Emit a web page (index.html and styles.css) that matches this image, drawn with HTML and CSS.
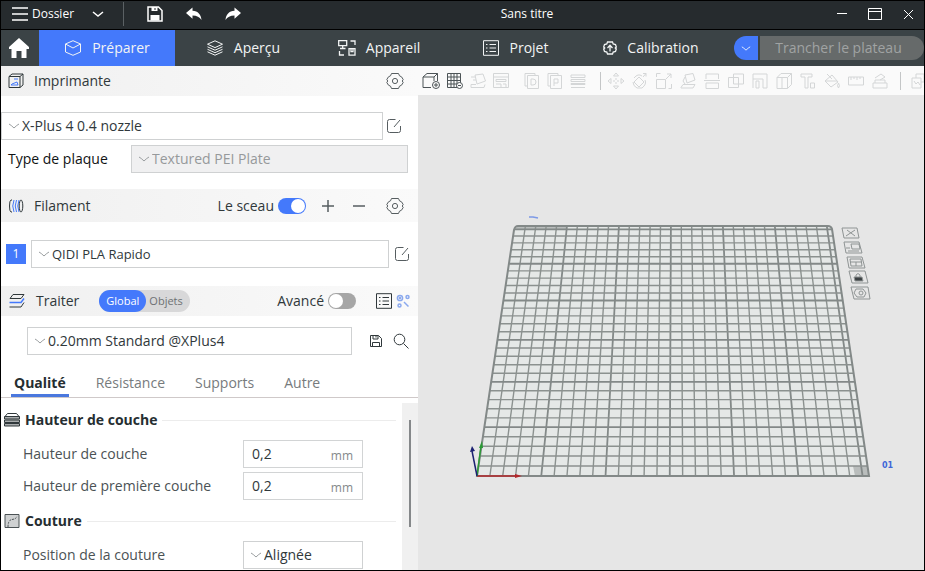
FILE: index.html
```
<!doctype html>
<html lang="fr">
  <head>
    <meta charset="UTF-8" />
    <meta name="viewport" content="width=device-width, initial-scale=1.0" />
    <title>Sans titre</title>
    <link rel="stylesheet" href="styles.css">
  </head>
  <body>
    <!-- shared symbols -->
    <svg class="sprite" aria-hidden="true">
      <symbol id="chevron" viewBox="0 0 12 8">
        <path d="M1 2 Q3 3 6 6 Q9 3 11 2" />
      </symbol>
      <symbol id="gear" viewBox="0 0 18 18">
        <path d="M5.500 1.500 H12.500 Q13 4.500 15.500 4.800 L17.200 7.500 Q15.300 9 17.200 10.500 L15.500 13.200 Q13 13.500 12.500 16.500 H5.500 Q5 13.500 2.500 13.200 L.8 10.500 Q2.700 9 .8 7.500 L2.500 4.800 Q5 4.500 5.500 1.500z" />
        <circle cx="9" cy="9" r="2.600" />
      </symbol>
      <symbol id="edit" viewBox="0 0 16 16">
        <path d="M9.500 1.500 H3.500 q-2 0 -2 2 v9 q0 2 2 2 h9 q2 0 2 -2 V8 M8 9 L14 2" />
      </symbol>
      <symbol id="list" viewBox="0 0 18 16">
        <path d="M1.500 .7 h15 v14.600 h-15z M7.500 4.500 h6.500 M7.500 8 h6.500 M7.500 11.500 h6.500 M4 4.500 h1.500 M4 8 h1.500 M4 11.500 h1.500" />
      </symbol>
    </svg>

    <div class="window">
      <header class="titlebar">
        <button class="file-menu">
          <svg class="line" width="16" height="14" viewBox="0 0 16 14"><path d="M0 1 h16 M0 7 h16 M0 13 h16" stroke-width="1.500" /></svg>
          <span>Dossier</span>
          <svg class="line file-chevron" width="12" height="8" viewBox="0 0 12 8"><path d="M1 2 L6 6 L11 2" stroke-width="1.500" /></svg>
        </button>
        <button class="title-btn" aria-label="Enregistrer">
          <svg width="16" height="16" viewBox="0 0 16 16">
            <path d="M1 1 h10.500 l3.500 3.500 V15 H1z" fill="none" stroke="#fff" stroke-width="1.500" />
            <path d="M4.500 1 h6 v4 h-6z M3.500 9 h9 v5.500 h-9z" fill="#fff" />
            <path d="M8 2 v2" stroke="#262b2e" />
          </svg>
        </button>
        <button class="title-btn" aria-label="Annuler">
          <svg width="16" height="14" viewBox="0 0 16 14"><path d="M0 6 L6.500 .5 V3.700 C12 4 15 7.500 15.500 13 C13.500 10 11 8.600 6.500 8.500 V11.700z" fill="#fff" /></svg>
        </button>
        <button class="title-btn" aria-label="Rétablir">
          <svg width="16" height="14" viewBox="0 0 16 14"><path d="M16 6 L9.500 .5 V3.700 C4 4 1 7.500 .5 13 C2.500 10 5 8.600 9.500 8.500 V11.700z" fill="#fff" /></svg>
        </button>
        <h1 class="doc-title">Sans titre</h1>
        <div class="window-buttons">
          <button aria-label="Réduire"><svg class="line" width="14" height="14" viewBox="0 0 14 14"><path d="M2 6.500 h10" /></svg></button>
          <button aria-label="Agrandir"><svg class="line" width="14" height="14" viewBox="0 0 14 14"><path d="M.5 1.500 h13 v11 h-13z M.5 4.500 h13" /></svg></button>
          <button aria-label="Fermer"><svg class="line" width="14" height="14" viewBox="0 0 14 14"><path d="M3 3 l9 9 M12 3 l-9 9" /></svg></button>
        </div>
      </header>

      <nav class="tabs">
        <a class="home" href="#" aria-label="Accueil">
          <svg width="20" height="20" viewBox="0 0 20 20"><path d="M10 0 L20 9 V11 H17.500 V20 H12.500 V13 H7.500 V20 H2.500 V11 H0 V9z" fill="#fff" /></svg>
        </a>
        <a class="tab active" href="#prepare">
          <svg class="line" width="18" height="16" viewBox="0 0 18 16"><path d="M9 .7 L16.500 4 V12 L9 15.300 L1.500 12 V4z M1.500 4 L9 8 L16.500 4" /></svg>
          Préparer
        </a>
        <a class="tab" href="#preview">
          <svg class="line" width="18" height="16" viewBox="0 0 18 16"><path d="M9 .8 L16.500 4.200 L9 7.600 L1.500 4.200z M1.500 6.800 L9 10.200 L16.500 6.800 M1.500 9.300 L9 12.700 L16.500 9.300 M1.500 11.800 L9 15.200 L16.500 11.800" /></svg>
          Aperçu
        </a>
        <a class="tab" href="#device">
          <svg class="line" width="18" height="16" viewBox="0 0 18 16"><path d="M.7 .7 h8 v5 h-8z M4.700 6 v2.500 M2 8.500 h5.500 M12.500 1 h4.500 v4 M1.500 11 v4 h4.500 M11 8.700 h6 v6.500 h-6z M13 8.700 v3 h2 v-3" stroke-width="1.300" /></svg>
          Appareil
        </a>
        <a class="tab" href="#project">
          <svg class="line" width="18" height="16"><use href="#list" /></svg>
          Projet
        </a>
        <a class="tab" href="#calibration">
          <svg class="line" width="14" height="14" viewBox="0 0 14 14"><path d="M4.500 1 H9.500 L10.200 3 L12.500 3.500 L13.300 6 L12.300 7 L13.300 8 L12.500 10.500 L10.200 11 L9.500 13 H4.500 L3.800 11 L1.500 10.500 L.7 8 L1.700 7 L.7 6 L1.500 3.500 L3.800 3z M7 10.500 V4.500 M4.500 7 L7 4.300 L9.500 7" stroke-width="1.300" /></svg>
          Calibration
        </a>
        <div class="slice">
          <button class="slice-menu" aria-label="Options de découpe"><svg class="line" width="10" height="7"><use href="#chevron" /></svg></button>
          <button class="slice-main" disabled>Trancher le plateau</button>
        </div>
      </nav>

      <div class="workspace">
        <aside class="sidebar">
          <section>
            <div class="section-head">
              <svg class="line" width="16" height="16" viewBox="0 0 16 16">
                <path d="M1 3.500 L4 1 H15 V12 L12 14.500 H1z M1 3.500 H12 V14.500 M12 3.500 L15 1" />
                <path d="M3 12 h7 l-1 -3 -5 2z M6 6 h4" stroke="#4479fb" />
              </svg>
              <h2>Imprimante</h2>
              <button class="icon-btn push" aria-label="Réglages imprimante"><svg class="line" width="18" height="18"><use href="#gear" /></svg></button>
            </div>
            <div class="row printer-row">
              <label class="combo">
                <svg class="line" width="12" height="8"><use href="#chevron" /></svg>
                <select aria-label="Imprimante"><option>X-Plus 4 0.4 nozzle</option></select>
              </label>
              <button class="icon-btn" aria-label="Modifier l'imprimante"><svg class="line" width="16" height="16"><use href="#edit" /></svg></button>
            </div>
            <div class="row plate-row">
              <label for="plate">Type de plaque</label>
              <div class="combo disabled">
                <svg class="line" width="12" height="8"><use href="#chevron" /></svg>
                <select id="plate" disabled><option>Textured PEI Plate</option></select>
              </div>
            </div>
          </section>

          <section>
            <div class="section-head filament-head">
              <svg class="line" width="16" height="16" viewBox="0 0 16 16">
                <path d="M4 2 H3 Q1.500 2.500 1.500 8 Q1.500 13.500 3 14 H4" />
                <path d="M6 2 Q3.500 8 6 14 M8.500 2 Q6 8 8.500 14 M11 2 Q8.500 8 11 14" stroke="#4479fb" />
                <ellipse cx="13" cy="8" rx="1.800" ry="6" />
              </svg>
              <h2>Filament</h2>
              <label class="switch push">Le sceau <input type="checkbox" checked></label>
              <button class="icon-btn add" aria-label="Ajouter"><svg class="line" width="14" height="14" viewBox="0 0 14 14"><path d="M1 7 h12 M7 1 v12" stroke-width="1.500" /></svg></button>
              <button class="icon-btn remove" aria-label="Retirer"><svg class="line" width="14" height="14" viewBox="0 0 14 14"><path d="M1 7 h12" stroke-width="1.500" /></svg></button>
              <button class="icon-btn" aria-label="Réglages filament"><svg class="line" width="18" height="18"><use href="#gear" /></svg></button>
            </div>
            <div class="row filament-row">
              <button class="slot">1</button>
              <label class="combo small">
                <svg class="line" width="12" height="8"><use href="#chevron" /></svg>
                <select aria-label="Filament"><option>QIDI PLA Rapido</option></select>
              </label>
              <button class="icon-btn" aria-label="Modifier le filament"><svg class="line" width="16" height="16"><use href="#edit" /></svg></button>
            </div>
          </section>

          <section class="process">
            <div class="section-head process-head">
              <svg class="line" width="18" height="16" viewBox="0 0 18 16">
                <path d="M5 1.500 H16 L13 5.500 H2z M16 9.500 L13 14 H1.500" />
                <path d="M16 5.500 L13 9.500 H1.500" stroke="#4479fb" stroke-width="1.500" />
              </svg>
              <h2>Traiter</h2>
              <div class="segmented">
                <button class="on">Global</button>
                <button>Objets</button>
              </div>
              <label class="switch push">Avancé <input type="checkbox"></label>
              <button class="icon-btn" aria-label="Liste des paramètres"><svg class="line dark" width="18" height="16"><use href="#list" /></svg></button>
              <button class="icon-btn compare" aria-label="Comparer">
                <svg width="14" height="14" viewBox="0 0 14 14" fill="none" stroke="#8ba9ee" stroke-width="1.500">
                  <circle cx="4" cy="4" r="2.600" /><circle cx="4" cy="4" r=".6" /><circle cx="11.500" cy="3" r="1.500" /><circle cx="3.500" cy="11.500" r="1.500" /><path d="M8 8 l4.500 4.500" />
                </svg>
              </button>
            </div>
            <div class="row preset-row">
              <label class="combo">
                <svg class="line" width="12" height="8"><use href="#chevron" /></svg>
                <select aria-label="Profil"><option>0.20mm Standard @XPlus4</option></select>
              </label>
              <button class="icon-btn" aria-label="Enregistrer le profil"><svg class="line dark" width="14" height="14" viewBox="0 0 14 14"><path d="M1.500 1.500 H9.500 L12.500 4.500 V12.500 H1.500z M4 1.500 v3.500 h5 v-3.500 M3.500 12.500 v-4 h7 v4 M7 2 v1.500" /></svg></button>
              <button class="icon-btn" aria-label="Rechercher"><svg class="line dark" width="16" height="16" viewBox="0 0 16 16"><circle cx="6.500" cy="6.500" r="5.300" /><path d="M10.500 10.500 L15.500 15.500" /></svg></button>
            </div>
            <nav class="subtabs">
              <a class="active" href="#quality">Qualité</a>
              <a href="#strength">Résistance</a>
              <a href="#support">Supports</a>
              <a href="#others">Autre</a>
            </nav>
            <div class="settings">
              <div class="settings-list">
                <h3>
                  <svg width="16" height="16" viewBox="0 0 16 16" fill="#a9acad" stroke="#30383b"><path d="M1 4.500 L3.500 1.500 H12.500 L15 4.500z" fill="#fff" /><path d="M.5 4.500 h15 v2.500 h-15z M.5 8 h15 v2.500 h-15z M.5 11.500 h15 v2.500 h-15z" /></svg>
                  Hauteur de couche
                </h3>
                <div class="option">
                  <label for="layer">Hauteur de couche</label>
                  <div class="field"><input id="layer" type="text" value="0,2"><span>mm</span></div>
                </div>
                <div class="option">
                  <label for="first">Hauteur de première couche</label>
                  <div class="field"><input id="first" type="text" value="0,2"><span>mm</span></div>
                </div>
                <h3>
                  <svg width="16" height="16" viewBox="0 0 16 16" fill="#cfd1d2" stroke="#4b5255"><path d="M1 1.500 h14 v13 h-14z" /><path d="M4 14 Q4 7 8 6.500 T13 3.500" fill="none" stroke-dasharray="2 1" /></svg>
                  Couture
                </h3>
                <div class="option">
                  <label for="seam">Position de la couture</label>
                  <div class="combo">
                    <svg class="line" width="12" height="8"><use href="#chevron" /></svg>
                    <select id="seam"><option>Alignée</option></select>
                  </div>
                </div>
              </div>
              <div class="scrollbar"><div class="thumb"></div></div>
            </div>
          </section>
        </aside>

        <main class="viewer">
          <div class="toolbar">
            <div class="tools add-tools">
              <button aria-label="Ajouter un objet"><svg width="18" height="18" viewBox="0 0 18 18"><path d="M1 5 L5 1.500 H15.500 L12 5z M1 5 V15.500 H9 M12 5 V9 M15.500 1.500 V9" /><circle cx="14" cy="13" r="3.500" /><path d="M14 11 v4 M12 13 h4" /></svg></button>
              <button aria-label="Ajouter une plaque"><svg width="16" height="18" viewBox="0 0 16 18"><path d="M.5 1.500 h13 v14 h-13z M4 1.500 v14 M7 1.500 v14 M10 1.500 v14 M.5 5 h13 M.5 8.500 h13 M.5 12 h13" /><circle cx="12.500" cy="13.500" r="3" fill="#fafafa" /><path d="M11 13.500 h3" /></svg></button>
              <button disabled aria-label="Orientation auto"><svg width="16" height="18" viewBox="0 0 16 18"><path d="M5 3 L13 2 L15.500 9 L7 12z M1 5 h4 M3 8 h3 M1 15.500 h13 l1 -3 M1 15.500 v-3 h5" /></svg></button>
              <button disabled aria-label="Arranger"><svg width="16" height="18" viewBox="0 0 16 18"><path d="M.5 1.500 h15 v14 h-15z M.5 5 h15 M3 7.500 h10 v2 h-10z M3 12 h5 v3 M10 12 h3 v3" /></svg></button>
            </div>
            <div class="tools copy-tools">
              <button disabled aria-label="Copier"><svg width="16" height="18" viewBox="0 0 16 18"><path d="M3.500 3.500 h11 v13 h-11z M3.500 14 h-2.500 v-12.500 h10 v2 M7 7 h2 q3 0 3 3 t-3 3 h-2z" /></svg></button>
              <button disabled aria-label="Coller"><svg width="16" height="18" viewBox="0 0 16 18"><path d="M3.500 3.500 h11 v13 h-11z M3.500 14 h-2.500 v-12.500 h10 v2 M7 14 v-7 h4 v4 h-4" /></svg></button>
              <button disabled aria-label="Couches variables"><svg width="16" height="18" viewBox="0 0 16 18"><path d="M1 3 h14 v2.500 h-14z M1 7.500 h14 v2 h-14z M1 11.500 h14 v1 h-14z M1 15.500 h14" /></svg></button>
            </div>
            <div class="tools edit-tools">
              <button disabled aria-label="Déplacer"><svg width="16" height="18" viewBox="0 0 16 18"><path d="M8 1 l2.500 3 h-5z M8 17 l2.500 -3 h-5z M0 9 l3 -2.500 v5z M16 9 l-3 -2.500 v5z M8 6 v2 M8 10 v2 M5 9 h2 M9 9 h2" /></svg></button>
              <button disabled aria-label="Pivoter"><svg width="16" height="18" viewBox="0 0 16 18"><path d="M7 5 l5 5 -5 5 -5 -5z M2 6 q4 -5 8 -2 M13 8 q2 4 -3 8 h-5 q-4 -2 -4 -6 M11 5 l3 -3.500 M14 1.500 v3 M14 1.500 h-3" /></svg></button>
              <button disabled aria-label="Échelle"><svg width="16" height="18" viewBox="0 0 16 18"><path d="M.5 7.500 h9 v9 h-9z M.5 5 v-3.500 h4 M15.500 12 v4.500 h-3 M10 7 l5 -5 M11 2 h4 v4" /></svg></button>
              <button disabled aria-label="Poser sur une face"><svg width="16" height="18" viewBox="0 0 16 18"><path d="M5 3 l8 -1.500 2 6.500 -8 3z M5 5 l-2 4 2 3 M1 15.500 l2 -3 h12 l-2 3.500 h-12z" /></svg></button>
              <button disabled aria-label="Couper"><svg width="16" height="18" viewBox="0 0 16 18"><path d="M2 7 v-5 h12.500 v5 M0 8.500 h16 M2 11 h12.500 v5.500 h-12.500z" /></svg></button>
              <button disabled aria-label="Booléen"><svg width="16" height="18" viewBox="0 0 16 18"><path d="M.5 5.500 h10 v10 h-10z M5.500 2 h10 v10 h-10z" /></svg></button>
              <button disabled aria-label="Supports peints"><svg width="16" height="18" viewBox="0 0 16 18"><path d="M1 2 h14 v14 h-4 v-9 h-10z M1 7 v9 M4 9 v7 h3 v-7z" /></svg></button>
              <button disabled aria-label="Couture peinte"><svg width="16" height="18" viewBox="0 0 16 18"><path d="M1 5.500 h10.500 v11 h-10.500z M1 5.500 l4 -4 h10.500 v11 l-4 4 M11.500 5.500 l4 -4 M6 5.500 v11" /></svg></button>
              <button disabled aria-label="Texte"><svg width="16" height="18" viewBox="0 0 16 18"><path d="M1 2 h11 v3 h-4 v11 h-3 v-11 h-4z M10.500 11 h4 v5 h-4z" /></svg></button>
              <button disabled aria-label="Peinture"><svg width="16" height="18" viewBox="0 0 16 18"><path d="M1 9 l7 -6 6 7 -7 5z M3 2 l5 5 M1 9 h12 M14.500 11 q2 3 0 5 q-2 -2 0 -5" /></svg></button>
              <button disabled aria-label="Mesurer"><svg width="16" height="18" viewBox="0 0 16 18"><path d="M.5 5 h15 v8 h-15z M3 5 v3 M6 5 v2 M9 5 v3 M12 5 v2" /></svg></button>
              <button disabled aria-label="Assembler"><svg width="16" height="18" viewBox="0 0 16 18"><path d="M1 11 h14 v5 h-14z M3 11 v-3 h10 v3 M3 6 l6 -4 4 3 -5 3" /></svg></button>
            </div>
            <div class="tools last-tools">
              <button disabled aria-label="Vue assemblage"><svg width="16" height="18" viewBox="0 0 16 18"><path d="M1 6 h9 v10 h-9z M5 6 v-4 h8 v8 h-3 M3 9 l2 3 2 -2 2 3" /></svg></button>
            </div>
          </div>
          <svg class="scene" viewBox="418 95 506 475" role="img" aria-label="Plateau 01">
            <path class="bed" d="M518 226 H828 Q831 226 832 229 L869 476 H477 L514 230 Q515 226 518 226z" />
            <path class="corner" d="M853 466 H867 L869 476 H855z" />
            <path class="corner" d="M518 226 H566 V229 H515z" />
            <g id="grid"></g>
            <path class="bed-edge" d="M518 226 H828 Q831 226 832 229 L869 476 H477 L514 230 Q515 226 518 226z" />

            <!-- axes -->
            <g stroke-width="1.500">
              <path d="M477 476 H517" stroke="#b3282b" /><path d="M515 474 L522 476 L515 478z" fill="#b3282b" />
              <path d="M477 476 L481 446" stroke="#2a9a35" /><path d="M479 448 L482 441 L483 448z" fill="#2a9a35" />
              <path d="M477 476 L472 451" stroke="#1c2272" /><path d="M470 452 L472 446 L475 451z" fill="#1c2272" />
            </g>
            <path d="M529 217 h4 l5 1" fill="none" stroke="#7d99e6" stroke-width="1.500" />

            <!-- plate buttons -->
            <g class="plate-icons">
              <path d="M842 228 h15 l2 10 h-15z M847 230 l8 6 M855 230 l-9 6" />
              <path d="M844 242 h15 l3 11 h-16z M851 244 h8 l1 5 h-8z M846 248 h4 M848 251 h11" />
              <path d="M847 257 h15 l3 11 h-16z M850 259 h11 l1 7 h-11z M850 262 h12 M856 262 v4" />
              <path d="M849 271 h16 l3 12 h-16z M856 277 v-2 q2 -3 4 0 v2" />
              <path d="M854 277 h8 l1 4 h-8z" fill="#3c4143" />
              <path d="M851 287 h17 l2 12 h-16z M856 289 h7 l3 4 -2 4 h-7 l-3 -4z" />
              <circle cx="861" cy="293" r="2" />
            </g>
            <text class="plate-no" x="882" y="468">01</text>
          </svg>
        </main>
      </div>
    </div>
    <script src="grid.js"></script>
  </body>
</html>
```
FILE: styles.css
```
* {
  box-sizing: border-box;
}

body {
  margin: 0;
  font-family: 'Open Sans', 'Noto Sans', sans-serif;
  font-size: 14px;
  line-height: 20px;
  color: #30383b;
}

button,
input,
select {
  font: inherit;
  color: inherit;
  background: none;
  border: 0;
  padding: 0;
  margin: 0;
}

a {
  color: inherit;
  text-decoration: none;
}

h1,
h2,
h3 {
  margin: 0;
  font-size: 14px;
  font-weight: 400;
}

svg {
  display: block;
  flex: none;
}

.sprite {
  position: absolute;
  width: 0;
  height: 0;
}

.line {
  fill: none;
  stroke: currentColor;
}

.window {
  display: flex;
  flex-direction: column;
  height: 100vh;
  border: 1px solid #000;
  overflow: hidden;
}

/* title bar */
.titlebar {
  display: flex;
  align-items: center;
  flex: none;
  height: 29px;
  padding: 0 9px 2px 11px;
  background: #262b2e;
  border-bottom: 1px solid #000;
  color: #fff;
  font-size: 12px;
}

.file-menu {
  display: flex;
  align-items: center;
  gap: 4px;
  height: 24px;
  padding-right: 19px;
  border-right: 1px solid #5b6164;
}

.file-chevron {
  margin-left: 14px;
}

.title-btn {
  margin-left: 23px;
}

.doc-title {
  flex: 1;
  padding-right: 22px;
  text-align: center;
  font-size: 12px;
}

.window-buttons {
  display: flex;
  gap: 19px;
}

/* main tabs */
.tabs {
  display: flex;
  flex: none;
  height: 36px;
  background: #3b4346;
  color: #f2f4f4;
}

.home {
  display: flex;
  align-items: center;
  justify-content: center;
  width: 38px;
  padding-right: 2px;
}

.tab {
  display: flex;
  align-items: center;
  justify-content: center;
  gap: 10px;
  width: 136px;
}

.tab.active {
  background: #4479fb;
}

.slice {
  display: flex;
  align-items: center;
  gap: 2px;
  flex: 1;
  padding-left: 15px;
}

.slice-menu {
  display: flex;
  align-items: center;
  justify-content: center;
  width: 24px;
  height: 24px;
  border-radius: 12px 0 0 12px;
  background: #4479fb;
  color: #fff;
}

.slice-main {
  flex: 1;
  height: 24px;
  padding-right: 7px;
  border-radius: 0 12px 12px 0;
  background: #666a6a;
  color: #a0a3a3;
  white-space: nowrap;
}

.workspace {
  display: flex;
  flex: 1;
  min-height: 0;
}

/* left panel */
.sidebar {
  display: flex;
  flex-direction: column;
  flex: none;
  width: 417px;
  background: #fff;
}

.section-head {
  display: flex;
  align-items: center;
  height: 30px;
  padding: 0 14px 0 7px;
  background: linear-gradient(to right, #f0f0f0, #fafafa);
}

.section-head h2 {
  margin-left: 10px;
}

.filament-head {
  height: 33px;
}

.push {
  margin-left: auto;
}

.icon-btn {
  color: #565d60;
}

.dark {
  color: #30383b;
}

.row {
  display: flex;
  align-items: center;
}

.combo {
  display: flex;
  align-items: center;
  flex: 1;
  gap: 2px;
  height: 28px;
  padding-left: 6px;
  border: 1px solid #cfd1d2;
  background: #fff;
}

.combo svg {
  color: #9a9ea0;
}

.combo select {
  flex: 1;
  min-width: 0;
  appearance: none;
}

.combo.disabled {
  background: #f0f0f1;
  color: #96999b;
}

.combo.disabled select {
  opacity: 1;
}

.combo.small {
  font-size: 13px;
}

.printer-row {
  gap: 3px;
  padding: 16px 16px 5px 0;
}

.plate-row {
  padding: 0 10px 16px 7px;
  color: #101314;
}

.plate-row label {
  width: 123px;
}

.switch {
  display: flex;
  align-items: center;
  gap: 4px;
}

.switch input {
  appearance: none;
  width: 28px;
  height: 16px;
  padding: 1px;
  border-radius: 8px;
  background: #a6a6a6;
}

.switch input::before {
  content: '';
  display: block;
  width: 14px;
  height: 14px;
  border-radius: 7px;
  background: #fff;
}

.switch input:checked {
  background: #4479fb;
}

.switch input:checked::before {
  margin-left: 12px;
}

.add {
  margin-left: 15px;
}

.remove {
  margin: 0 20px 0 17px;
}

.filament-row {
  gap: 5px;
  padding: 18px 8px 18px 5px;
}

.slot {
  width: 20px;
  height: 20px;
  background: #4479fb;
  color: #fff;
  font-size: 12px;
}

.process {
  display: flex;
  flex-direction: column;
  flex: 1;
  min-height: 0;
}

.process-head {
  flex: none;
  padding: 0 8px 0 7px;
}

.segmented {
  display: flex;
  margin-left: 20px;
  border-radius: 11px;
  background: #d8d8d9;
  color: #6d7173;
  font-size: 11px;
}

.segmented button {
  height: 22px;
  padding: 0 7px 0 3px;
  border-radius: 11px;
}

.segmented .on {
  padding: 0 7px;
  background: #4479fb;
  color: #fff;
}

.process-head .icon-btn {
  margin-left: 19px;
}

.process-head .compare {
  margin-left: 3px;
}

.preset-row {
  gap: 10px;
  padding: 11px 9px 0 26px;
}

.preset-row .combo {
  margin-right: 7px;
}

.subtabs {
  display: flex;
  flex: none;
  gap: 24px;
  height: 43px;
  padding: 16px 10px 0;
  border-bottom: 1px solid #cfc9c9;
  color: #777b7d;
}

.subtabs a {
  padding: 2px 3px 0;
}

.subtabs .active {
  border-bottom: 3px solid #4a78de;
  color: #262e31;
  font-weight: 700;
}

.settings {
  display: flex;
  flex: 1;
  min-height: 0;
  padding-top: 5px;
  overflow: hidden;
}

.settings-list {
  flex: 1;
  padding: 0 6px 0 3px;
}

.settings-list h3 {
  display: flex;
  align-items: center;
  gap: 5px;
  height: 34px;
  margin-bottom: 3px;
  color: #262e31;
  font-weight: 700;
}

.settings-list h3::after {
  content: '';
  flex: 1;
  height: 1px;
  background: #ececec;
}

.option {
  display: flex;
  align-items: center;
  height: 28px;
  margin: 0 33px 4px 19px;
}

.option label {
  flex: 1;
  color: #4b5255;
}

.option .combo,
.field {
  flex: none;
  width: 120px;
}

.field {
  display: flex;
  align-items: center;
  height: 28px;
  padding: 0 9px 0 8px;
  border: 1px solid #d2d4d5;
}

.field input {
  flex: 1;
  min-width: 0;
}

.field span {
  padding-top: 4px;
  color: #85898b;
  font-size: 12px;
}

.scrollbar {
  width: 16px;
  padding: 17px 7px 0;
  background: #f0f0f0;
}

.thumb {
  height: 107px;
  background: #85888a;
}

/* 3D view */
.viewer {
  display: flex;
  flex-direction: column;
  flex: 1;
  min-width: 0;
  background: #e6e6e6;
}

.toolbar {
  display: flex;
  align-items: center;
  flex: none;
  height: 29px;
  padding-left: 5px;
  background: #fafafa;
  overflow: hidden;
}

.tools {
  display: flex;
  flex: none;
  gap: 8px;
}

.tools svg {
  fill: none;
  stroke: #4d5457;
}

.tools button:disabled svg {
  stroke: #d4d6d7;
}

.add-tools,
.copy-tools {
  gap: 7px;
}

.add-tools {
  margin-left: -1px;
}

.copy-tools {
  margin: 0 14px 0 15px;
}

.edit-tools,
.last-tools {
  padding-left: 7px;
  border-left: 1px solid #c4c6c7;
}

.last-tools {
  margin-left: 12px;
  padding-left: 10px;
}

.scene {
  flex: 1;
  width: 100%;
  min-height: 0;
}

.bed {
  fill: #e5e8e7;
}

.bed-edge {
  fill: none;
  stroke: #838988;
  stroke-width: 2;
}

.corner {
  fill: #b9bdbc;
}

.grid-line {
  stroke: #8b918f;
  stroke-width: 1.4;
}

.grid-line.major {
  stroke: #838988;
  stroke-width: 1.8;
}

.plate-icons {
  fill: none;
  stroke: #8f9494;
}

.plate-no {
  fill: #3f66d8;
  font-family: 'DejaVu Sans', sans-serif;
  font-size: 8px;
  font-weight: 700;
}
```
FILE: grid.js
```
// Bed grid: one line every 10 mm, a heavier one every 50 mm
const grid = document.getElementById('grid');

const bed = { left: 477, right: 869, bottom: 476, topLeft: 515, topRight: 832, top: 226 };
const cells = 30.5;

function addLine(x1, y1, x2, y2, major) {
  const line = document.createElementNS('http://www.w3.org/2000/svg', 'line');
  line.setAttribute('x1', x1);
  line.setAttribute('y1', y1);
  line.setAttribute('x2', x2);
  line.setAttribute('y2', y2);
  line.setAttribute('class', major ? 'grid-line major' : 'grid-line');
  grid.appendChild(line);
}

for (let i = 1; i < cells; i++) {
  const t = i / cells;
  addLine(
    bed.left + (bed.right - bed.left) * t, bed.bottom,
    bed.topLeft + (bed.topRight - bed.topLeft) * t, bed.top,
    i % 5 === 0
  );
}

// rows get closer together towards the back of the bed
const ratio = (bed.right - bed.left) / (bed.topRight - bed.topLeft);
for (let i = 1; i < cells; i++) {
  const t = i / cells;
  const depth = (t * ratio) / (1 + t * (ratio - 1));
  const y = bed.bottom - (bed.bottom - bed.top) * depth;
  const left = bed.left + (bed.topLeft - bed.left) * depth;
  const right = bed.right + (bed.topRight - bed.right) * depth;
  addLine(left, y, right, y, i % 5 === 0);
}
```
